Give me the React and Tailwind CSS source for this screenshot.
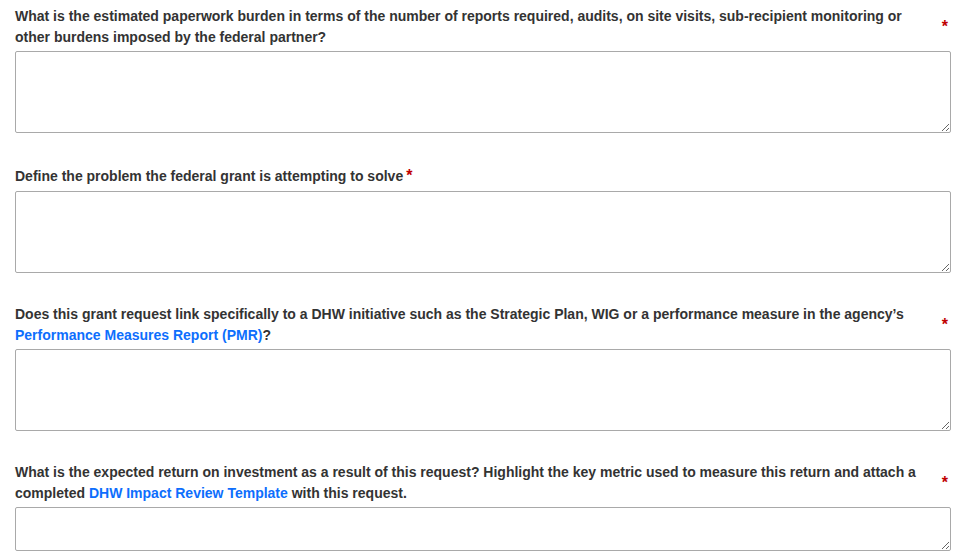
import React from "react";

function Star() {
  return <span className="text-[#c00000] text-[16px] font-bold leading-[21px] shrink-0">*</span>;
}

function Field({ children, h, single }) {
  return (
    <div className="flex flex-col">
      <div className={single ? "flex items-center" : "flex items-center justify-between"}>
        <label className="text-[14px] leading-[21px] font-bold text-[#333333] pr-[3px]">{children}</label>
        <span className={single ? "" : "pr-[3px]"}>
          <Star />
        </span>
      </div>
      <textarea
        className="mt-[3px] w-full border border-[#a9a9a9] rounded-[2px] bg-white outline-none block"
        style={{ height: h }}
      />
    </div>
  );
}

const A = ({ children }) => (
  <a href="#" className="text-[#0d6efd]">{children}</a>
);

export default function App() {
  return (
    <div
      className="w-[975px] h-[560px] overflow-hidden bg-white pl-[15px] pr-[24px] pt-[6px] flex flex-col gap-[31px]"
      style={{ fontFamily: '"Liberation Sans", Arial, sans-serif' }}
    >
      <Field h={82}>
        What is the estimated paperwork burden in terms of the number of reports required, audits, on site visits, sub-recipient monitoring or other burdens imposed by the federal partner?
      </Field>
      <Field h={82} single>
        Define the problem the federal grant is attempting to solve
      </Field>
      <Field h={82}>
        Does this grant request link specifically to a DHW initiative such as the Strategic Plan, WIG or a performance measure in the agency’s <A>Performance Measures Report (PMR)</A>?
      </Field>
      <Field h={44}>
        What is the expected return on investment as a result of this request? Highlight the key metric used to measure this return and attach a completed <A>DHW Impact Review Template</A> with this request.
      </Field>
    </div>
  );
}
